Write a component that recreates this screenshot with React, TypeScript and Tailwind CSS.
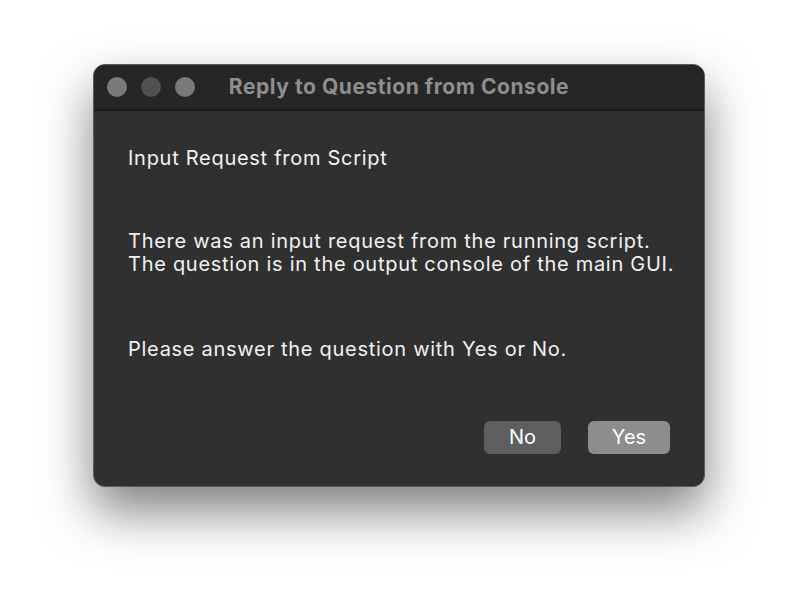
export default function App() {
  const font = { fontFamily: 'Inter, "Liberation Sans", sans-serif' };
  return (
    <div className="w-[799px] h-[610px] bg-white flex items-start pt-[64px] pl-[93px]" style={font}>
      <div className="w-[612px] h-[423px] rounded-[12px] border border-[#5c5c5c] bg-[#303030] flex flex-col overflow-hidden shadow-[0_24px_50px_rgba(0,0,0,0.5)]">
        <div className="h-[46px] shrink-0 bg-[#262626] border-b-2 border-[#1b1b1b] flex items-center relative">
          <div className="flex items-center gap-[14px] pl-[13px]">
            <div className="w-[20px] h-[20px] rounded-full bg-[#7a7a7a]" />
            <div className="w-[20px] h-[20px] rounded-full bg-[#505050]" />
            <div className="w-[20px] h-[20px] rounded-full bg-[#7a7a7a]" />
          </div>
          <div className="absolute inset-0 flex items-center justify-center text-[21px] font-bold text-[#8e8e8e] tracking-[0.55px]">
            Reply to Question from Console
          </div>
        </div>
        <div className="flex flex-col pl-[34px] pr-[20px] text-[#f2f2f2] text-[20px] leading-[23px] tracking-[0.72px]">
          <div className="mt-[36px]">Input Request from Script</div>
          <div className="mt-[60px] whitespace-nowrap">There was an input request from the running script.</div>
          <div className="whitespace-nowrap">The question is in the output console of the main GUI.</div>
          <div className="mt-[62px]">Please answer the question with Yes or No.</div>
          <div className="flex justify-end gap-[27px] mt-[60px] pr-[14px] tracking-normal">
            <div className="w-[77px] h-[33px] rounded-[6px] bg-[#5e5e5e] flex items-center justify-center text-white">No</div>
            <div className="w-[82px] h-[33px] rounded-[6px] bg-[#8d8d8d] flex items-center justify-center text-white">Yes</div>
          </div>
        </div>
      </div>
    </div>
  );
}
